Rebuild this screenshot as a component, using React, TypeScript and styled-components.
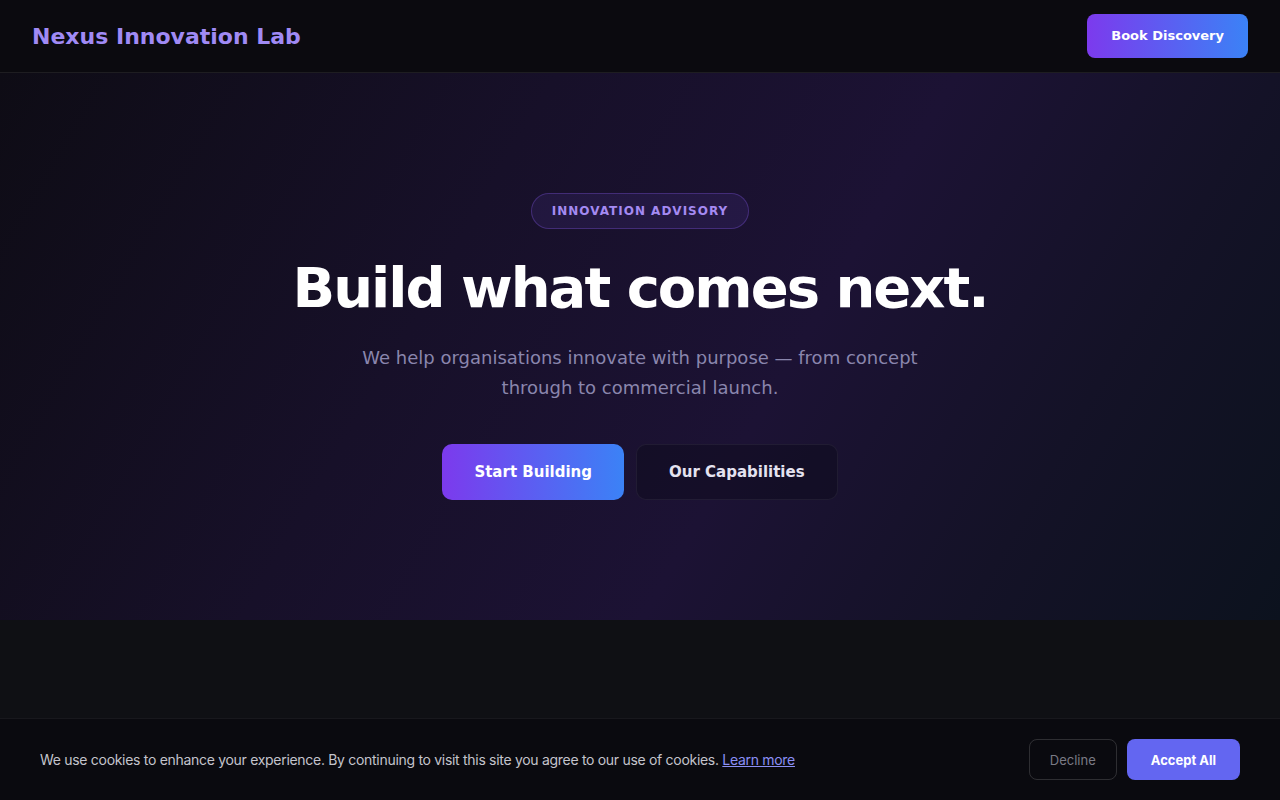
import styled, { createGlobalStyle } from "styled-components";

const GlobalStyle = createGlobalStyle`
  html, body {
    margin: 0;
    padding: 0;
    background: #0f1014;
    font-family: "DejaVu Sans", sans-serif;
  }
  * {
    box-sizing: border-box;
  }
`;

const App = () => {
  return (
    <Page>
      <GlobalStyle />
      <Header>
        <Logo>Nexus Innovation Lab</Logo>
        <GradientButton size="small">Book Discovery</GradientButton>
      </Header>
      <Hero>
        <Badge>Innovation Advisory</Badge>
        <Title>Build what comes next.</Title>
        <Subtitle>
          We help organisations innovate with purpose — from concept through to
          commercial launch.
        </Subtitle>
        <Actions>
          <GradientButton size="large">Start Building</GradientButton>
          <GhostButton>Our Capabilities</GhostButton>
        </Actions>
      </Hero>
      <Section />
      <CookieBar>
        <CookieText>
          We use cookies to enhance your experience. By continuing to visit this
          site you agree to our use of cookies. <CookieLink href="#">Learn more</CookieLink>
        </CookieText>
        <CookieActions>
          <DeclineButton>Decline</DeclineButton>
          <AcceptButton>Accept All</AcceptButton>
        </CookieActions>
      </CookieBar>
    </Page>
  );
};

export default App;

const Page = styled.div`
  min-height: 800px;
  display: flex;
  flex-direction: column;
`;

const Header = styled.header`
  height: 73px;
  padding: 0 32px;
  display: flex;
  align-items: center;
  justify-content: space-between;
  background: #0b0a0f;
  border-bottom: 1px solid rgba(255, 255, 255, 0.08);
`;

const Logo = styled.div`
  font-size: 22px;
  font-weight: bold;
  color: #a08af5;
`;

const GradientButton = styled.button<{ size: "small" | "large" }>`
  border: none;
  color: #ffffff;
  font-family: "DejaVu Sans", sans-serif;
  font-weight: bold;
  background: linear-gradient(90deg, #7c3aed, #3b82f6);
  cursor: pointer;
  ${({ size }) =>
    size === "small"
      ? `
    height: 44px;
    padding: 0 24px;
    font-size: 13px;
    border-radius: 8px;
    line-height: 42px;
  `
      : `
    height: 56px;
    padding: 0 32px;
    font-size: 15px;
    border-radius: 10px;
  `}
`;

const Hero = styled.section`
  height: 547px;
  display: flex;
  flex-direction: column;
  align-items: center;
  padding-top: 120px;
  background: linear-gradient(
    120deg,
    #0e0c15 0%,
    #171029 35%,
    #1c1234 60%,
    #141227 80%,
    #0c121e 100%
  );
`;

const Badge = styled.div`
  height: 36px;
  padding: 0 20px;
  display: flex;
  align-items: center;
  border-radius: 18px;
  background: rgba(124, 92, 246, 0.1);
  border: 1px solid rgba(139, 92, 246, 0.3);
  color: #a48af2;
  font-size: 12px;
  font-weight: bold;
  letter-spacing: 1px;
  text-transform: uppercase;
`;

const Title = styled.h1`
  margin: 24px 0 0;
  font-size: 56px;
  line-height: 70px;
  font-weight: bold;
  letter-spacing: -2px;
  color: #ffffff;
`;

const Subtitle = styled.p`
  margin: 20px 0 0;
  max-width: 580px;
  text-align: center;
  font-size: 18px;
  line-height: 30px;
  color: #8a86ad;
`;

const Actions = styled.div`
  margin-top: 41px;
  display: flex;
  gap: 12px;
`;

const GhostButton = styled.button`
  height: 56px;
  padding: 0 32px;
  border-radius: 10px;
  border: 1px solid rgba(255, 255, 255, 0.06);
  background: rgba(10, 8, 20, 0.35);
  color: #e4e2f0;
  font-family: "DejaVu Sans", sans-serif;
  font-size: 15px;
  font-weight: bold;
  cursor: pointer;
`;

const Section = styled.section`
  flex: 1;
  background: #0f1014;
`;

const CookieBar = styled.div`
  position: fixed;
  left: 0;
  right: 0;
  bottom: 0;
  height: 82px;
  padding: 0 40px;
  display: flex;
  align-items: center;
  justify-content: space-between;
  background: #0a0a0f;
  border-top: 1px solid rgba(255, 255, 255, 0.06);
`;

const CookieText = styled.p`
  margin: 0;
  font-family: Inter, sans-serif;
  font-size: 14px;
  letter-spacing: -0.3px;
  color: #c4c4cc;
`;

const CookieLink = styled.a`
  color: #8b8ff5;
  text-decoration: underline;
`;

const CookieActions = styled.div`
  display: flex;
  gap: 10px;
`;

const DeclineButton = styled.button`
  height: 41px;
  padding: 0 20px;
  border-radius: 8px;
  border: 1px solid rgba(255, 255, 255, 0.15);
  background: transparent;
  color: #7a7a85;
  font-family: Inter, sans-serif;
  font-size: 13px;
  cursor: pointer;
`;

const AcceptButton = styled.button`
  height: 41px;
  padding: 0 24px;
  border-radius: 8px;
  border: none;
  background: #6366f1;
  color: #ffffff;
  font-family: Inter, sans-serif;
  font-size: 13px;
  font-weight: bold;
  cursor: pointer;
`;
